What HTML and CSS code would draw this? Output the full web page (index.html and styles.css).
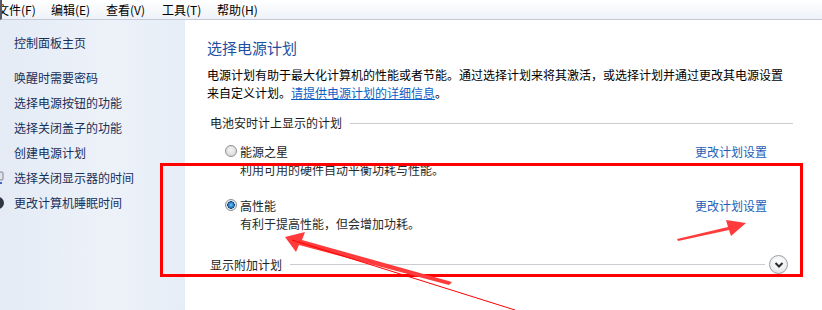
FILE: index.html
```html
<!DOCTYPE html>
<html lang="zh-CN">
<head>
<meta charset="utf-8">
<title>电源选项</title>
<link rel="stylesheet" href="styles.css">
</head>
<body>
<div class="window">
  <div class="menubar">
    <span class="menu m1">文件(F)</span>
    <span class="menu m2">编辑(E)</span>
    <span class="menu m3">查看(V)</span>
    <span class="menu m4">工具(T)</span>
    <span class="menu m5">帮助(H)</span>
  </div>
  <div class="content">
    <nav class="sidebar">
      <a class="nav home">控制面板主页</a>
      <a class="nav">唤醒时需要密码</a>
      <a class="nav">选择电源按钮的功能</a>
      <a class="nav">选择关闭盖子的功能</a>
      <a class="nav">创建电源计划</a>
      <a class="nav iconed"><svg class="navicon" width="12" height="14" viewBox="0 0 12 14"><rect x="1" y="1" width="10" height="8" rx="1" fill="#dfe4ea" stroke="#7a8594"/><rect x="5" y="9" width="2" height="3" fill="#7a8594"/><rect x="2" y="11" width="8" height="2" fill="#3f63c8"/></svg>选择关闭显示器的时间</a>
      <a class="nav iconed"><svg class="navicon" width="12" height="14" viewBox="0 0 12 14"><circle cx="6" cy="7" r="6" fill="#2e3642"/><circle cx="4" cy="5" r="2" fill="#5a6678"/></svg>更改计算机睡眠时间</a>
    </nav>
    <main class="main">
      <h1 class="title">选择电源计划</h1>
      <p class="intro">电源计划有助于最大化计算机的性能或者节能。通过选择计划来将其激活，或选择计划并通过更改其电源设置来自定义计划。<a class="link">请提供电源计划的详细信息</a>。</p>
      <div class="section-head"><span>电池安时计上显示的计划</span><span class="rule"></span></div>
      <div class="plan first">
        <div class="plan-line">
          <label class="plan-name"><span class="radio"></span>能源之星</label>
          <a class="plan-link">更改计划设置</a>
        </div>
        <div class="plan-desc">利用可用的硬件自动平衡功耗与性能。</div>
      </div>
      <div class="plan second">
        <div class="plan-line">
          <label class="plan-name"><span class="radio checked"></span>高性能</label>
          <a class="plan-link">更改计划设置</a>
        </div>
        <div class="plan-desc">有利于提高性能，但会增加功耗。</div>
      </div>
      <div class="section-head more"><span>显示附加计划</span><span class="rule"></span><span class="expand"><svg width="10" height="8" viewBox="0 0 10 8"><path d="M1.5 2 L5 5.5 L8.5 2" fill="none" stroke="#2b2b2b" stroke-width="2"/></svg></span></div>
    </main>
  </div>
  <svg class="annot" width="822" height="310" viewBox="0 0 822 310">
    <rect x="161.5" y="164.5" width="640" height="111" fill="none" stroke="#ff0000" stroke-width="3"/>
    <polygon points="285,237 305,232 302,240 452,282 449,285 299,245 296,252" fill="#ff3b3b"/>
    <line x1="292" y1="240" x2="515" y2="310" stroke="#ff0000" stroke-width="1"/>
    <polygon points="746,223 731,236 729,230 678,241 677,239 728,227 726,220" fill="#ff3b3b"/>
  </svg>
</div>
</body>
</html>
```
FILE: styles.css
```css
* { box-sizing: border-box; }
html, body { margin: 0; padding: 0; }
body {
  width: 822px;
  height: 310px;
  overflow: hidden;
  background: #fff;
  font-family: "Noto Sans CJK SC", "Noto Sans", "Liberation Sans", sans-serif;
  font-size: 12px;
  color: #000;
}
.window { position: relative; width: 822px; height: 310px; display: flex; flex-direction: column; }
.menubar {
  height: 20px;
  flex: none;
  display: flex;
  align-items: center;
  background: linear-gradient(#ffffff, #eef2f8);
  border-bottom: 1px solid #c3cad6;
  border-left: 2px solid #555a62;
  white-space: nowrap;
  overflow: hidden;
}
.menu { display: inline-block; line-height: 19px; color: #000; }
.m1 { margin-left: -5px; width: 54px; }
.m2 { width: 55px; }
.m3 { width: 56px; }
.m4 { width: 55px; }
.content { flex: 1; display: flex; min-height: 0; }
.sidebar {
  width: 185px;
  flex: none;
  display: flex;
  flex-direction: column;
  padding: 10px 0 0 14px;
  background: linear-gradient(90deg, #e4ebf5 0%, #edf2f9 60%, #e6edf7 100%);
}
.nav {
  display: flex;
  align-items: center;
  height: 25px;
  color: #1a2f58;
  white-space: nowrap;
}
.nav.home { margin-bottom: 10px; }
.nav.iconed { margin-left: -22px; }
.navicon { flex: none; margin-right: 10px; }
.main { flex: 1; padding: 18px 0 0 22px; }
.title {
  margin: 0;
  font-size: 15px;
  font-weight: normal;
  line-height: 20px;
  color: #1e4fa0;
}
.intro {
  margin: 8px 0 0 0;
  width: 585px;
  line-height: 18px;
}
.link { color: #0a5fc4; text-decoration: underline; }
.section-head {
  display: flex;
  align-items: center;
  width: 583px;
  margin: 12px 0 0 3px;
  line-height: 18px;
  color: #1c1c1c;
}
.section-head .rule { flex: 1; height: 1px; background: #c9cdd2; margin-left: 8px; }
.section-head.more { margin-top: 22px; width: 578px; }
.expand {
  width: 19px;
  height: 19px;
  flex: none;
  margin-left: 4px;
  border-radius: 50%;
  border: 1px solid #9aa0a6;
  background: radial-gradient(circle at 50% 35%, #ffffff 0%, #eceef0 60%, #cfd3d7 100%);
  display: flex;
  align-items: center;
  justify-content: center;
}
.plan { margin-left: 18px; width: 542px; }
.plan.first { margin-top: 10px; }
.plan.second { margin-top: 17px; }
.plan-line { display: flex; justify-content: space-between; align-items: center; height: 18px; }
.plan-name { display: flex; align-items: center; color: #1c1c1c; }
.radio {
  width: 12px;
  height: 12px;
  border-radius: 50%;
  border: 1px solid #8e8f8f;
  background: radial-gradient(circle at 50% 40%, #f4f4f4 0%, #dcdcdc 70%, #c8c8c8 100%);
  margin-right: 3px;
  position: relative;
}
.radio.checked {
  background: radial-gradient(circle at 50% 50%, #7fc6ee 0%, #2a7cc0 35%, #0f4d8a 50%, #e8eef3 56%, #d4d9de 100%);
}
.plan-link { color: #1d5fb8; margin-right: 0; }
.plan-desc { margin: 1px 0 0 15px; line-height: 18px; color: #2a2a2a; }
.annot { position: absolute; left: 0; top: 0; pointer-events: none; }
```
